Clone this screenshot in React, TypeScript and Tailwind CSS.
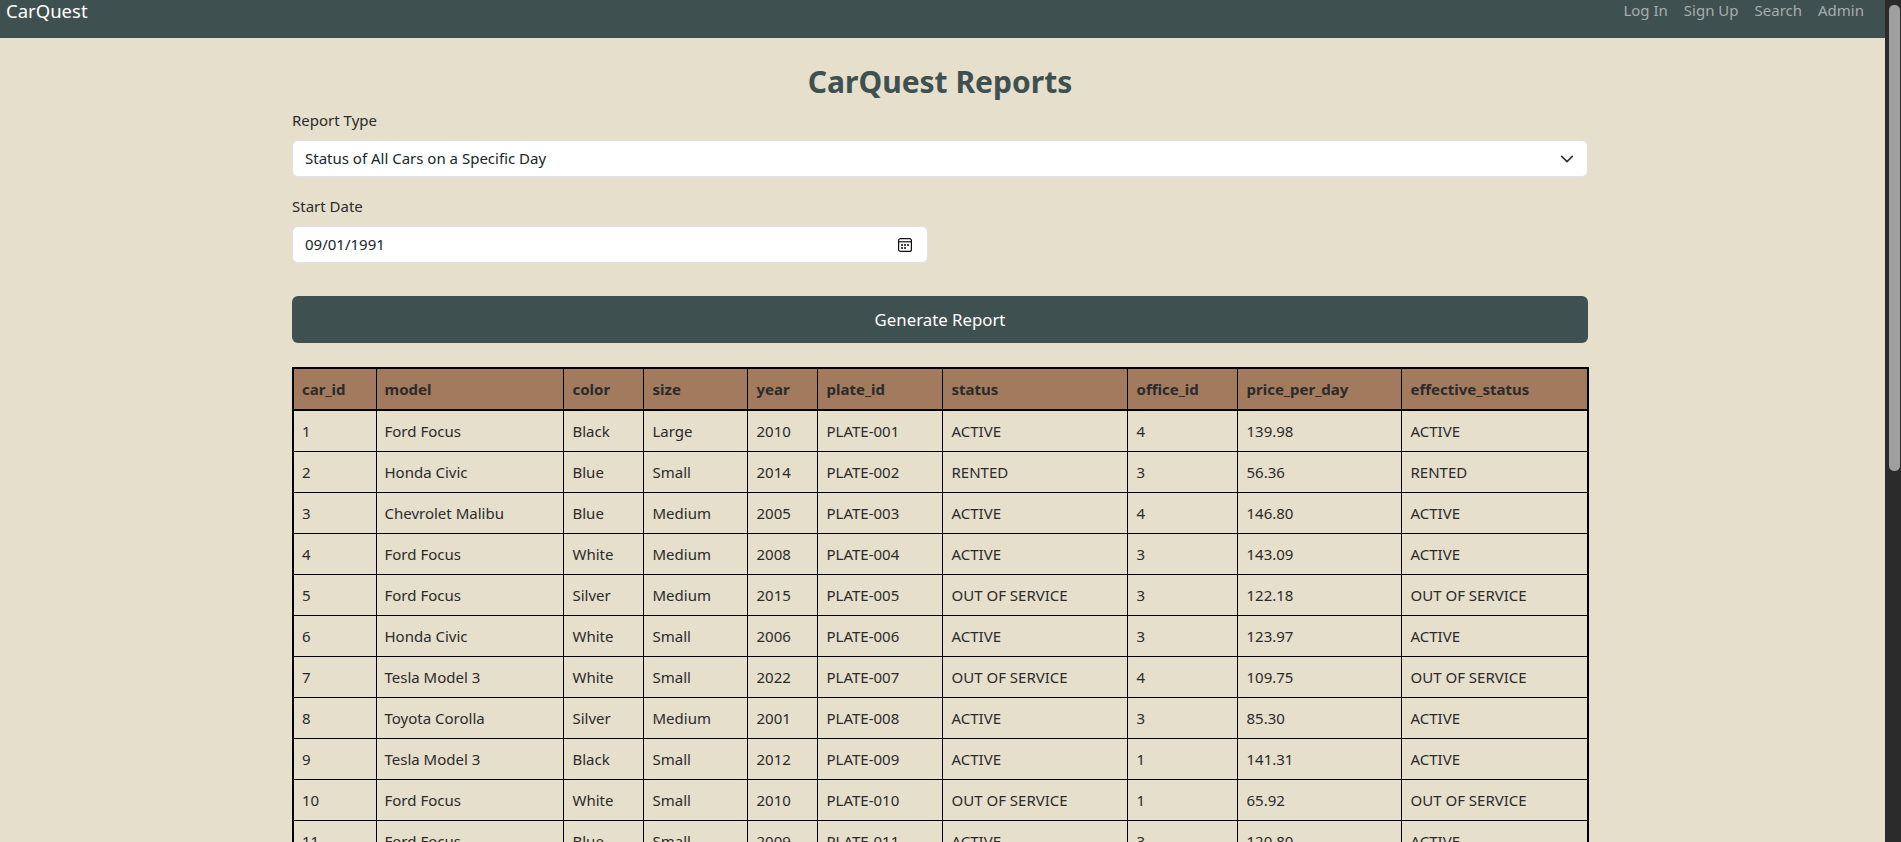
const rows = [
  ["1","Ford Focus","Black","Large","2010","PLATE-001","ACTIVE","4","139.98","ACTIVE"],
  ["2","Honda Civic","Blue","Small","2014","PLATE-002","RENTED","3","56.36","RENTED"],
  ["3","Chevrolet Malibu","Blue","Medium","2005","PLATE-003","ACTIVE","4","146.80","ACTIVE"],
  ["4","Ford Focus","White","Medium","2008","PLATE-004","ACTIVE","3","143.09","ACTIVE"],
  ["5","Ford Focus","Silver","Medium","2015","PLATE-005","OUT OF SERVICE","3","122.18","OUT OF SERVICE"],
  ["6","Honda Civic","White","Small","2006","PLATE-006","ACTIVE","3","123.97","ACTIVE"],
  ["7","Tesla Model 3","White","Small","2022","PLATE-007","OUT OF SERVICE","4","109.75","OUT OF SERVICE"],
  ["8","Toyota Corolla","Silver","Medium","2001","PLATE-008","ACTIVE","3","85.30","ACTIVE"],
  ["9","Tesla Model 3","Black","Small","2012","PLATE-009","ACTIVE","1","141.31","ACTIVE"],
  ["10","Ford Focus","White","Small","2010","PLATE-010","OUT OF SERVICE","1","65.92","OUT OF SERVICE"],
  ["11","Ford Focus","Blue","Small","2009","PLATE-011","ACTIVE","3","120.80","ACTIVE"],
];
const heads = ["car_id","model","color","size","year","plate_id","status","office_id","price_per_day","effective_status"];
const widths = [83,187,80,104,70,125,185,110,164,187];

export default function App() {
  return (
    <div className="flex h-[842px] overflow-hidden bg-[#e5dfcc] font-['Noto_Sans',sans-serif] text-[15px] text-[#2b2b2b]">
      <div className="min-w-0 flex-1">
        <nav className="flex h-[38px] items-start justify-between bg-[#3f5050] pl-[6px] pr-[21px]">
          <span className="text-[18.5px] leading-[22px] text-white">CarQuest</span>
          <div className="flex gap-[16px] text-[15px] leading-[20px] text-[#a5adad]">
            <span>Log In</span><span>Sign Up</span><span>Search</span><span>Admin</span>
          </div>
        </nav>
        <main className="ml-[292px] w-[1296px] pt-[26px]">
          <h2 className="h-[44px] text-center text-[30px] leading-[36px] font-bold text-[#3f5050]">CarQuest Reports</h2>
          <div className="mb-[8px] leading-[24px]">Report Type</div>
          <div className="flex h-[37px] items-center justify-between rounded-[6px] border border-[#dee2e6] bg-white pl-[12px] pr-[13px] text-[#212529]">
            <span>Status of All Cars on a Specific Day</span>
            <svg width="14" height="14" viewBox="0 0 16 16" fill="none" stroke="#343a40" strokeWidth="2" strokeLinecap="round" strokeLinejoin="round"><path d="m2 5 6 6 6-6" /></svg>
          </div>
          <div className="mb-[8px] mt-[17px] leading-[24px]">Start Date</div>
          <div className="flex h-[37px] w-[636px] items-center justify-between rounded-[6px] border border-[#dee2e6] bg-white pl-[12px] pr-[15px] text-[#212529]">
            <span>09/01/1991</span>
            <svg width="14" height="14" viewBox="0 0 14 14" fill="none"><rect x="0.6" y="0.6" width="12.8" height="12.8" rx="2" stroke="#111" strokeWidth="1.2"/><path d="M1 3.8h12" stroke="#111" strokeWidth="1.2"/><path d="M3 6h2v2H3zM6 6h2v2H6zM9 6h2v2H9zM3 9h2v2H3zM6 9h2v2H6z" fill="#444"/></svg>
          </div>
          <button className="mt-[33px] block h-[47px] w-full rounded-[6px] bg-[#3f5050] text-center text-[16.8px] text-white">Generate Report</button>
          <table className="mt-[24px] w-[1295px] table-fixed border-collapse border-2 border-black">
            <colgroup>{widths.map((w, i) => <col key={i} style={{ width: w }} />)}</colgroup>
            <thead>
              <tr className="h-[42px] bg-[#a27a5d]">
                {heads.map((h, i) => <th key={h} className={i < 2 ? "border border-b-2 border-black px-[8px] text-left font-bold" : "border border-b-2 border-black pl-[9px] pr-[7px] text-left font-bold"}>{h}</th>)}
              </tr>
            </thead>
            <tbody>
              {rows.map(r => (
                <tr key={r[0]} className="h-[41px]">
                  {r.map((c, i) => <td key={i} className={i < 2 ? "border border-black px-[8px] pt-[1px]" : "border border-black pl-[9px] pr-[7px] pt-[1px]"}>{c}</td>)}
                </tr>
              ))}
            </tbody>
          </table>
        </main>
      </div>
      <div className="w-[16px] shrink-0 bg-[#2b2b2b] pl-[4px] pr-[1px] pt-[5px]">
        <div className="h-[466px] rounded-[5px] bg-[#9f9f9f]" />
      </div>
    </div>
  );
}
